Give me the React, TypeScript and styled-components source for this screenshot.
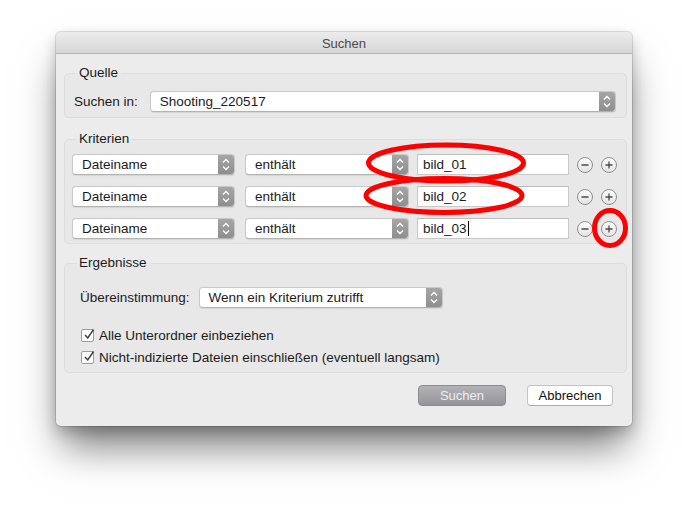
import React from "react";
import styled, { createGlobalStyle } from "styled-components";

const Global = createGlobalStyle`
  html, body { margin: 0; padding: 0; background: #ffffff; }
  body { font-family: "Liberation Sans", Arial, sans-serif; font-size: 13px; color: #1b1b1b; }
  * { box-sizing: border-box; }
`;

const Page = styled.div`
  position: relative;
  width: 688px;
  height: 506px;
  padding: 32px 0 0 56px;
  overflow: hidden;
  background: #ffffff;
`;

const Window = styled.div`
  width: 576px;
  height: 394px;
  border-radius: 5px;
  background: #ececec;
  display: flex;
  flex-direction: column;
  box-shadow: 0 0 0 1px rgba(0, 0, 0, 0.12), 0 26px 38px -6px rgba(0, 0, 0, 0.52),
    0 6px 14px rgba(0, 0, 0, 0.2);
  overflow: hidden;
`;

const TitleBar = styled.div`
  height: 22px;
  flex: none;
  display: flex;
  align-items: center;
  justify-content: center;
  background: linear-gradient(#ececec, #d6d6d6);
  border-bottom: 1px solid #b4b4b4;
  color: #4a4a4a;
  font-size: 13px;
  padding-top: 1px;
`;

const Content = styled.div`
  display: flex;
  flex-direction: column;
  padding: 11px 5px 0 8px;
`;

const Group = styled.fieldset<{ $mt?: number; $pb: number }>`
  margin: ${(p) => p.$mt ?? 0}px 0 0 0;
  padding: 0 0 ${(p) => p.$pb}px 0;
  border: 1px solid #dddddd;
  border-radius: 5px;
  background: #e8e8e8;
  min-width: 0;
`;

const Legend = styled.legend`
  margin-left: 11px;
  padding: 0 3px;
  line-height: 16px;
  font-size: 13.5px;
  color: #1b1b1b;
`;

const GroupBody = styled.div<{ $pl: number; $pr: number; $pt: number; $gap?: number }>`
  display: flex;
  flex-direction: column;
  gap: ${(p) => p.$gap ?? 0}px;
  padding: ${(p) => p.$pt}px ${(p) => p.$pr}px 0 ${(p) => p.$pl}px;
`;

const Row = styled.div<{ $gap: number }>`
  display: flex;
  align-items: center;
  gap: ${(p) => p.$gap}px;
`;

const Label = styled.span`
  white-space: nowrap;
  font-size: 13.5px;
`;

const PopupBox = styled.div<{ $w?: number }>`
  display: flex;
  height: 21px;
  ${(p) => (p.$w ? `width: ${p.$w}px;` : "flex: 1;")}
  flex-shrink: 0;
  border-radius: 4px;
  border: 1px solid #c9c9c9;
  border-bottom-color: #b2b2b2;
  background: #ffffff;
  overflow: hidden;
  box-shadow: 0 0.5px 1px rgba(0, 0, 0, 0.08);
`;

const PopupText = styled.div`
  flex: 1;
  display: flex;
  align-items: center;
  padding-left: 9px;
  font-size: 13.5px;
  white-space: nowrap;
  color: #1b1b1b;
`;

const Stepper = styled.div`
  width: 16px;
  flex: none;
  display: flex;
  align-items: center;
  justify-content: center;
  background: linear-gradient(#a6a6a6, #8e8e8e);
`;

const Chevrons = () => (
  <svg width="16" height="19" viewBox="0 0 16 19">
    <path d="M5 7.5 L8 4.5 L11 7.5" fill="none" stroke="#ffffff" strokeWidth="1.3" />
    <path d="M5 11.5 L8 14.5 L11 11.5" fill="none" stroke="#ffffff" strokeWidth="1.3" />
  </svg>
);

const Popup = ({ text, w }: { text: string; w?: number }) => (
  <PopupBox $w={w}>
    <PopupText>{text}</PopupText>
    <Stepper>
      <Chevrons />
    </Stepper>
  </PopupBox>
);

const TextField = styled.div`
  width: 152px;
  height: 21px;
  flex: none;
  display: flex;
  align-items: center;
  padding-left: 5px;
  background: #ffffff;
  border: 1px solid #cacaca;
  border-top-color: #bcbcbc;
  font-size: 13.5px;
  color: #1b1b1b;
`;

const Caret = styled.span`
  display: inline-block;
  width: 1px;
  height: 15px;
  background: #000;
  margin-left: 1px;
`;

const RoundBtn = styled.div`
  width: 16px;
  height: 16px;
  flex: none;
  border-radius: 50%;
  border: 1px solid #8f8f8f;
  background: linear-gradient(#fdfdfd, #e4e4e4);
  display: flex;
  align-items: center;
  justify-content: center;
`;

const PlusMinus = ({ plus }: { plus?: boolean }) => (
  <RoundBtn>
    <svg width="14" height="14" viewBox="0 0 14 14">
      <path d="M3.5 7 H10.5" stroke="#4a4a4a" strokeWidth="1.3" />
      {plus && <path d="M7 3.5 V10.5" stroke="#4a4a4a" strokeWidth="1.3" />}
    </svg>
  </RoundBtn>
);

const CheckRow = styled.div`
  display: flex;
  align-items: center;
  height: 22px;
  gap: 5px;
`;

const CheckBox = styled.div`
  position: relative;
  width: 13px;
  height: 13px;
  flex: none;
  border: 1px solid #9c9c9c;
  border-radius: 2px;
  background: #ffffff;
`;

const CheckMark = styled.svg`
  position: absolute;
  left: 1px;
  top: -2px;
`;

const Check = ({ label }: { label: string }) => (
  <CheckRow>
    <CheckBox>
      <CheckMark width="13" height="13" viewBox="0 0 13 13">
        <path d="M2 7 L4.8 10 L10.5 1.5" fill="none" stroke="#3a3a3a" strokeWidth="1.4" />
      </CheckMark>
    </CheckBox>
    <Label>{label}</Label>
  </CheckRow>
);

const ButtonBar = styled.div`
  display: flex;
  justify-content: flex-end;
  gap: 21px;
  padding: 12px 19px 0 0;
`;

const Button = styled.div<{ $primary?: boolean; $w: number }>`
  width: ${(p) => p.$w}px;
  height: 21px;
  border-radius: 4px;
  display: flex;
  align-items: center;
  justify-content: center;
  font-size: 13px;
  ${(p) =>
    p.$primary
      ? `background: linear-gradient(#b3b3b7, #959599);
         border: 1px solid #8c8c90;
         color: #eeeeee;`
      : `background: #ffffff;
         border: 1px solid #c3c3c3;
         border-bottom-color: #adadad;
         color: #111111;`}
`;

const Overlay = styled.svg`
  position: absolute;
  left: 0;
  top: 0;
  pointer-events: none;
`;

const Spacer = styled.div<{ $w: number }>`
  width: ${(p) => p.$w}px;
  flex: none;
`;

const ChecksWrap = styled.div`
  display: flex;
  flex-direction: column;
  margin-top: 16px;
  margin-left: 1px;
`;

const criteria = ["bild_01", "bild_02", "bild_03"];

export default function App() {
  return (
    <Page>
      <Global />
      <Window>
        <TitleBar>Suchen</TitleBar>
        <Content>
          <Group $pb={5}>
            <Legend>Quelle</Legend>
            <GroupBody $pl={9} $pr={10} $pt={10}>
              <Row $gap={12}>
                <Label>Suchen in:</Label>
                <Popup text="Shooting_220517" />
              </Row>
            </GroupBody>
          </Group>
          <Group $mt={13} $pb={4}>
            <Legend>Kriterien</Legend>
            <GroupBody $pl={7} $pr={9} $pt={7} $gap={11}>
              {criteria.map((c, i) => (
                <Row key={c} $gap={0}>
                  <Popup text="Dateiname" w={163} />
                  <Spacer $w={10} />
                  <Popup text="enthält" w={164} />
                  <Spacer $w={8} />
                  <TextField>
                    {c}
                    {i === 2 && <Caret />}
                  </TextField>
                  <Spacer $w={8} />
                  <PlusMinus />
                  <Spacer $w={8} />
                  <PlusMinus plus />
                </Row>
              ))}
            </GroupBody>
          </Group>
          <Group $mt={11} $pb={4}>
            <Legend>Ergebnisse</Legend>
            <GroupBody $pl={15} $pr={10} $pt={16}>
              <Row $gap={9}>
                <Label>Übereinstimmung:</Label>
                <Popup text="Wenn ein Kriterium zutrifft" w={244} />
              </Row>
              <ChecksWrap>
                <Check label="Alle Unterordner einbeziehen" />
                <Check label="Nicht-indizierte Dateien einschließen (eventuell langsam)" />
              </ChecksWrap>
            </GroupBody>
          </Group>
        </Content>
        <ButtonBar>
          <Button $primary $w={88}>
            Suchen
          </Button>
          <Button $w={86}>Abbrechen</Button>
        </ButtonBar>
      </Window>
      <Overlay width="688" height="506" viewBox="0 0 688 506">
        <ellipse cx="446" cy="163" rx="77.5" ry="18" fill="none" stroke="#ff0000" strokeWidth="5" />
        <ellipse cx="444" cy="195.5" rx="78" ry="17" fill="none" stroke="#ff0000" strokeWidth="5" />
        <ellipse cx="610" cy="228" rx="15.5" ry="17.5" fill="none" stroke="#ff0000" strokeWidth="5" />
      </Overlay>
    </Page>
  );
}
